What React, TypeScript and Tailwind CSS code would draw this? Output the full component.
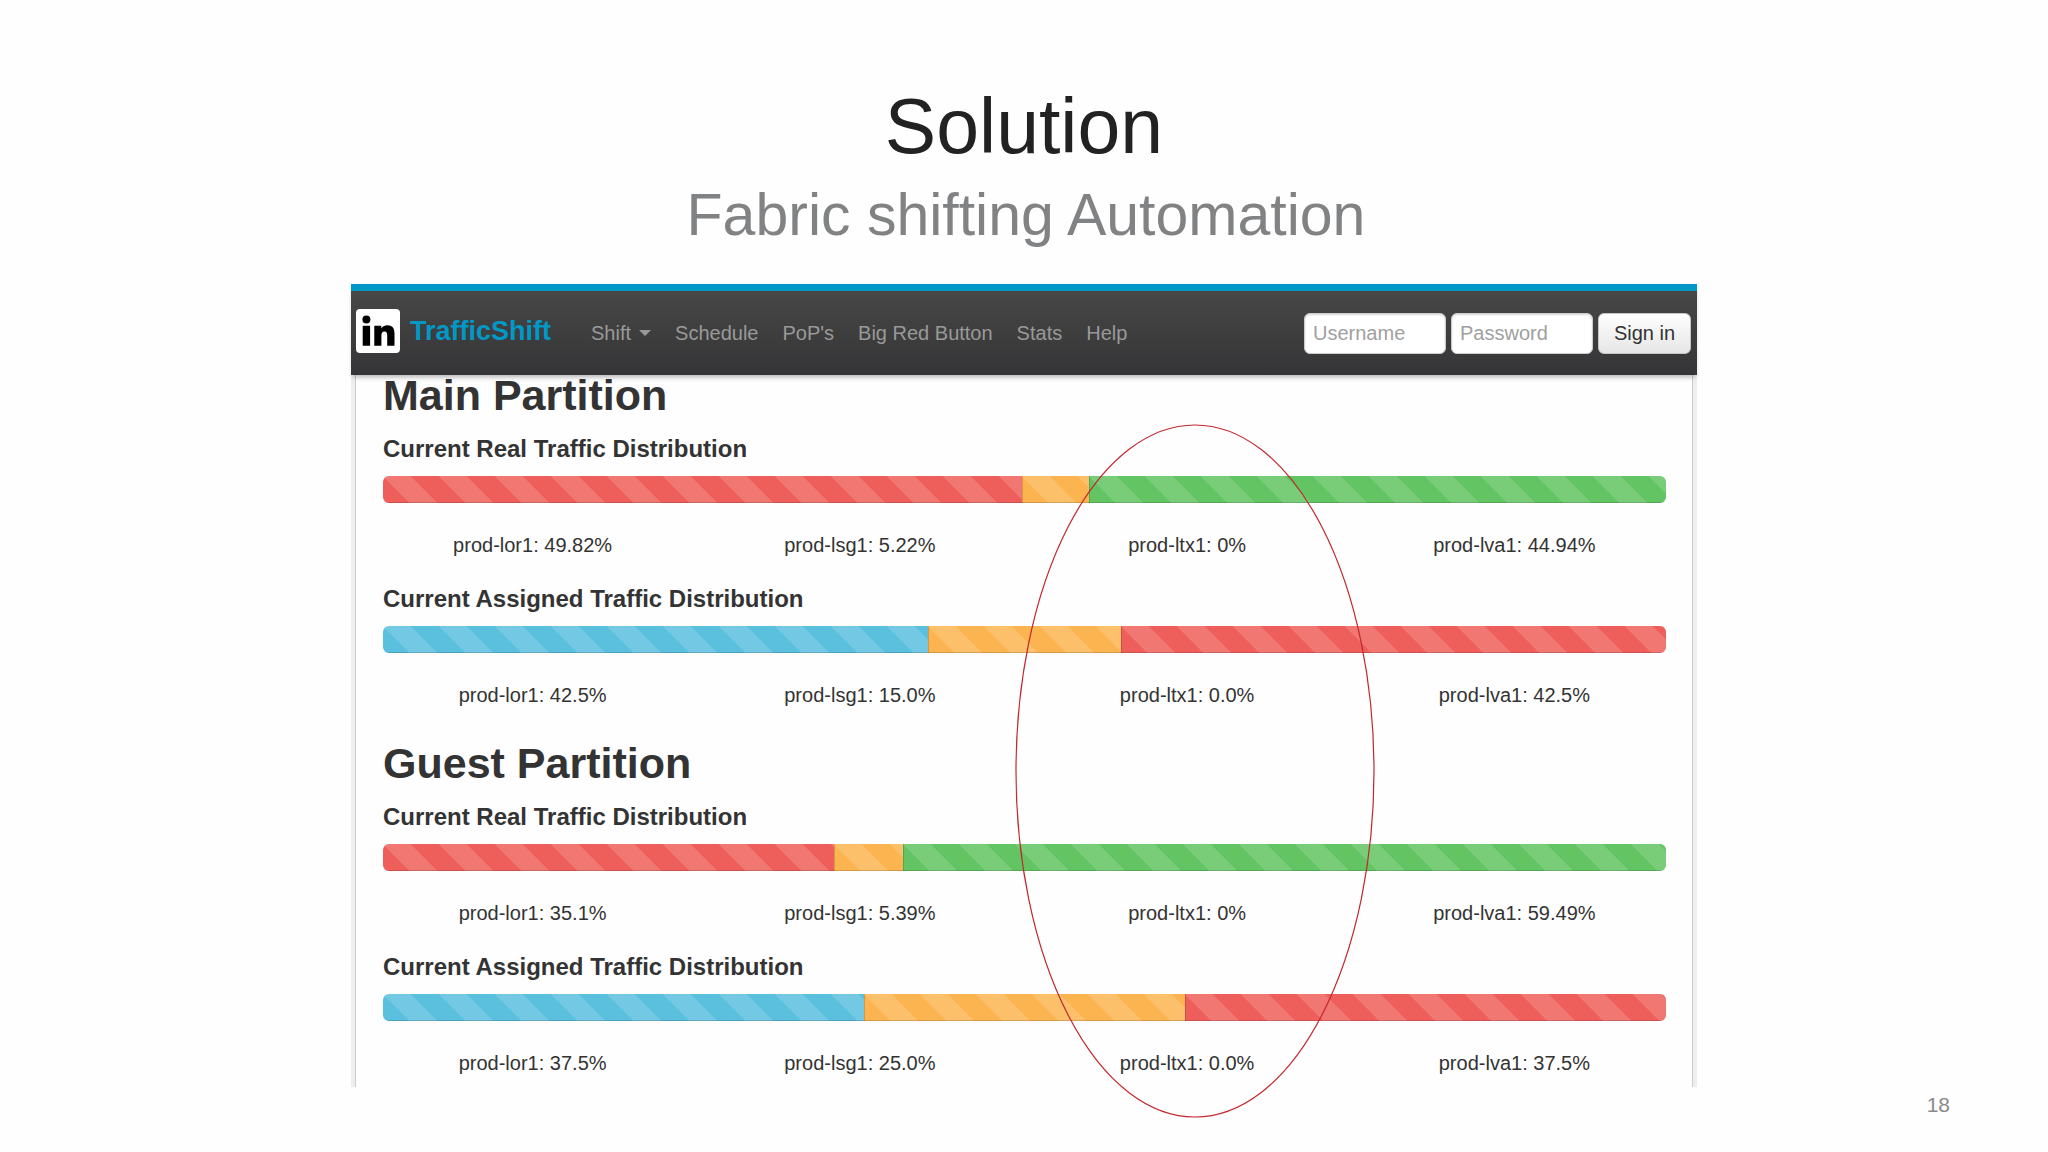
import React from "react";

type Tone = "red" | "orange" | "green" | "blue";

interface Segment {
  name: string;
  value: string;
  share: number;
  tone: Tone;
}

interface Distribution {
  title: string;
  segments: Segment[];
}

interface Partition {
  title: string;
  distributions: Distribution[];
}

const tones: Record<Tone, string> = {
  red: "bg-[#ee5f5b]",
  orange: "bg-[#fbb450]",
  green: "bg-[#62c462]",
  blue: "bg-[#5bc0de]",
};

const partitions: Partition[] = [
  {
    title: "Main Partition",
    distributions: [
      {
        title: "Current Real Traffic Distribution",
        segments: [
          { name: "prod-lor1", value: "49.82%", share: 49.84, tone: "red" },
          { name: "prod-lsg1", value: "5.22%", share: 5.22, tone: "orange" },
          { name: "prod-ltx1", value: "0%", share: 0, tone: "green" },
          { name: "prod-lva1", value: "44.94%", share: 44.94, tone: "green" },
        ],
      },
      {
        title: "Current Assigned Traffic Distribution",
        segments: [
          { name: "prod-lor1", value: "42.5%", share: 42.5, tone: "blue" },
          { name: "prod-lsg1", value: "15.0%", share: 15, tone: "orange" },
          { name: "prod-ltx1", value: "0.0%", share: 0, tone: "green" },
          { name: "prod-lva1", value: "42.5%", share: 42.5, tone: "red" },
        ],
      },
    ],
  },
  {
    title: "Guest Partition",
    distributions: [
      {
        title: "Current Real Traffic Distribution",
        segments: [
          { name: "prod-lor1", value: "35.1%", share: 35.12, tone: "red" },
          { name: "prod-lsg1", value: "5.39%", share: 5.39, tone: "orange" },
          { name: "prod-ltx1", value: "0%", share: 0, tone: "green" },
          { name: "prod-lva1", value: "59.49%", share: 59.49, tone: "green" },
        ],
      },
      {
        title: "Current Assigned Traffic Distribution",
        segments: [
          { name: "prod-lor1", value: "37.5%", share: 37.5, tone: "blue" },
          { name: "prod-lsg1", value: "25.0%", share: 25, tone: "orange" },
          { name: "prod-ltx1", value: "0.0%", share: 0, tone: "green" },
          { name: "prod-lva1", value: "37.5%", share: 37.5, tone: "red" },
        ],
      },
    ],
  },
];

const links = ["Schedule", "PoP's", "Big Red Button", "Stats", "Help"];

function Logo() {
  return (
    <svg viewBox="0 0 44 44" className="size-11 shrink-0" aria-label="LinkedIn" role="img">
      <rect width="44" height="44" rx="4" fill="#fff" />
      <circle cx="10.4" cy="10.6" r="4" fill="#000" />
      <path
        d="M6.700 16.800h7.400v20H6.700zM18.300 16.800h7v2.700c1-1.800 3.100-3.200 6.200-3.200 5.600 0 7 3.600 7 8.800v11.700h-7.300V26.700c0-2.500-.3-4.300-2.700-4.300-2.500 0-3.100 1.900-3.100 4.200v10.200h-7.100z"
        fill="#000"
      />
    </svg>
  );
}

function Navbar() {
  return (
    <header className="relative z-10 flex h-[91px] items-center border-t-[7px] border-[#0098c7] bg-linear-to-b from-[#474747] to-[#353537] pr-1.5 pl-[5px] shadow-[0_4px_5px_-2px_rgba(0,0,0,0.3)]">
      <a href="#home" className="flex items-center gap-2.5 pb-1 text-[27px] leading-8 font-bold text-[#0098c7]">
        <Logo />
        TrafficShift
      </a>
      <nav className="ml-10 flex items-center gap-6 text-xl text-[#999999]">
        <a href="#shift" className="flex items-center gap-2">
          Shift
          <svg viewBox="0 0 12 6" className="h-1.5 w-3" aria-hidden="true">
            <path d="M0 0h12L6 6z" fill="currentColor" />
          </svg>
        </a>
        {links.map((link) => (
          <a key={link} href="#section" className="whitespace-nowrap">
            {link}
          </a>
        ))}
      </nav>
      <form className="ml-auto flex gap-[5px] text-xl" onSubmit={(e) => e.preventDefault()}>
        <input
          type="text"
          aria-label="Username"
          placeholder="Username"
          className="h-[41px] w-[142px] rounded-md border border-[#cccccc] bg-white px-2 shadow-[inset_0_1px_2px_rgba(0,0,0,0.15)] placeholder:text-[#a0a0a0]"
        />
        <input
          type="password"
          aria-label="Password"
          placeholder="Password"
          className="h-[41px] w-[142px] rounded-md border border-[#cccccc] bg-white px-2 shadow-[inset_0_1px_2px_rgba(0,0,0,0.15)] placeholder:text-[#a0a0a0]"
        />
        <button
          type="submit"
          className="h-[41px] w-[93px] rounded-md border border-[#c4c4c4] bg-linear-to-b from-white to-[#e6e6e6] text-[#333333]"
        >
          Sign in
        </button>
      </form>
    </header>
  );
}

function DistributionRow({ title, segments }: Distribution) {
  return (
    <section className="h-[150px]">
      <h3 className="text-2xl leading-7 font-bold">{title}</h3>
      <div className="mt-[13px] flex h-[27px] overflow-hidden rounded-md">
        {segments
          .filter((s) => s.share > 0)
          .map((s, i) => (
            <div
              key={s.name}
              className={`${tones[s.tone]} ${
                i > 0
                  ? "shadow-[inset_1px_0_0_rgba(0,0,0,0.15),inset_0_-1px_0_rgba(0,0,0,0.15)]"
                  : "shadow-[inset_0_-1px_0_rgba(0,0,0,0.15)]"
              } bg-[linear-gradient(45deg,rgba(255,255,255,0.15)_25%,transparent_25%,transparent_50%,rgba(255,255,255,0.15)_50%,rgba(255,255,255,0.15)_75%,transparent_75%,transparent)] bg-size-[56px_56px]`}
              style={{ width: `${s.share}%` }}
            />
          ))}
      </div>
      <ul className="mt-7 -mr-3 -ml-3.5 grid grid-cols-4 text-center text-xl leading-7">
        {segments.map((s) => (
          <li key={s.name}>
            {s.name}: {s.value}
          </li>
        ))}
      </ul>
    </section>
  );
}

export default function App() {
  return (
    <main className="flex min-h-screen flex-col bg-[#fefefe] font-['Liberation_Sans',Arial,sans-serif] text-[#333333]">
      <div className="pt-20 text-center">
        <h1 className="text-[77px] leading-[92px] text-[#222222]">Solution</h1>
        <p className="mt-2 pt-0.5 pl-1 text-[59px] leading-[66px] text-[#808284]">Fabric shifting Automation</p>
      </div>
      <div className="relative mx-auto mt-9 w-full max-w-[1346px]">
        <Navbar />
        <div className="bg-[#eeeeee] px-1">
          <div className="border-x border-[#cccccc] bg-[#fefefe] pr-[26px] pl-[27px]">
            {partitions.map((p) => (
              <div key={p.title} className="h-[368px] last:h-[344px]">
                <h2 className="text-[43px] leading-10 font-bold">{p.title}</h2>
                <div className="pt-5">
                  {p.distributions.map((d) => (
                    <DistributionRow key={d.title} {...d} />
                  ))}
                </div>
              </div>
            ))}
          </div>
        </div>
        <svg
          viewBox="0 0 360 694"
          className="absolute top-[140px] left-[664px] z-20 h-[694px] w-[360px]"
          aria-hidden="true"
        >
          <ellipse cx="180" cy="347" rx="179" ry="346" fill="none" stroke="#c1272d" strokeWidth="1.2" />
        </svg>
      </div>
      <footer className="pt-1.5 pr-[98px] text-right text-[21px] leading-6 text-[#8a8a8a]">18</footer>
    </main>
  );
}
